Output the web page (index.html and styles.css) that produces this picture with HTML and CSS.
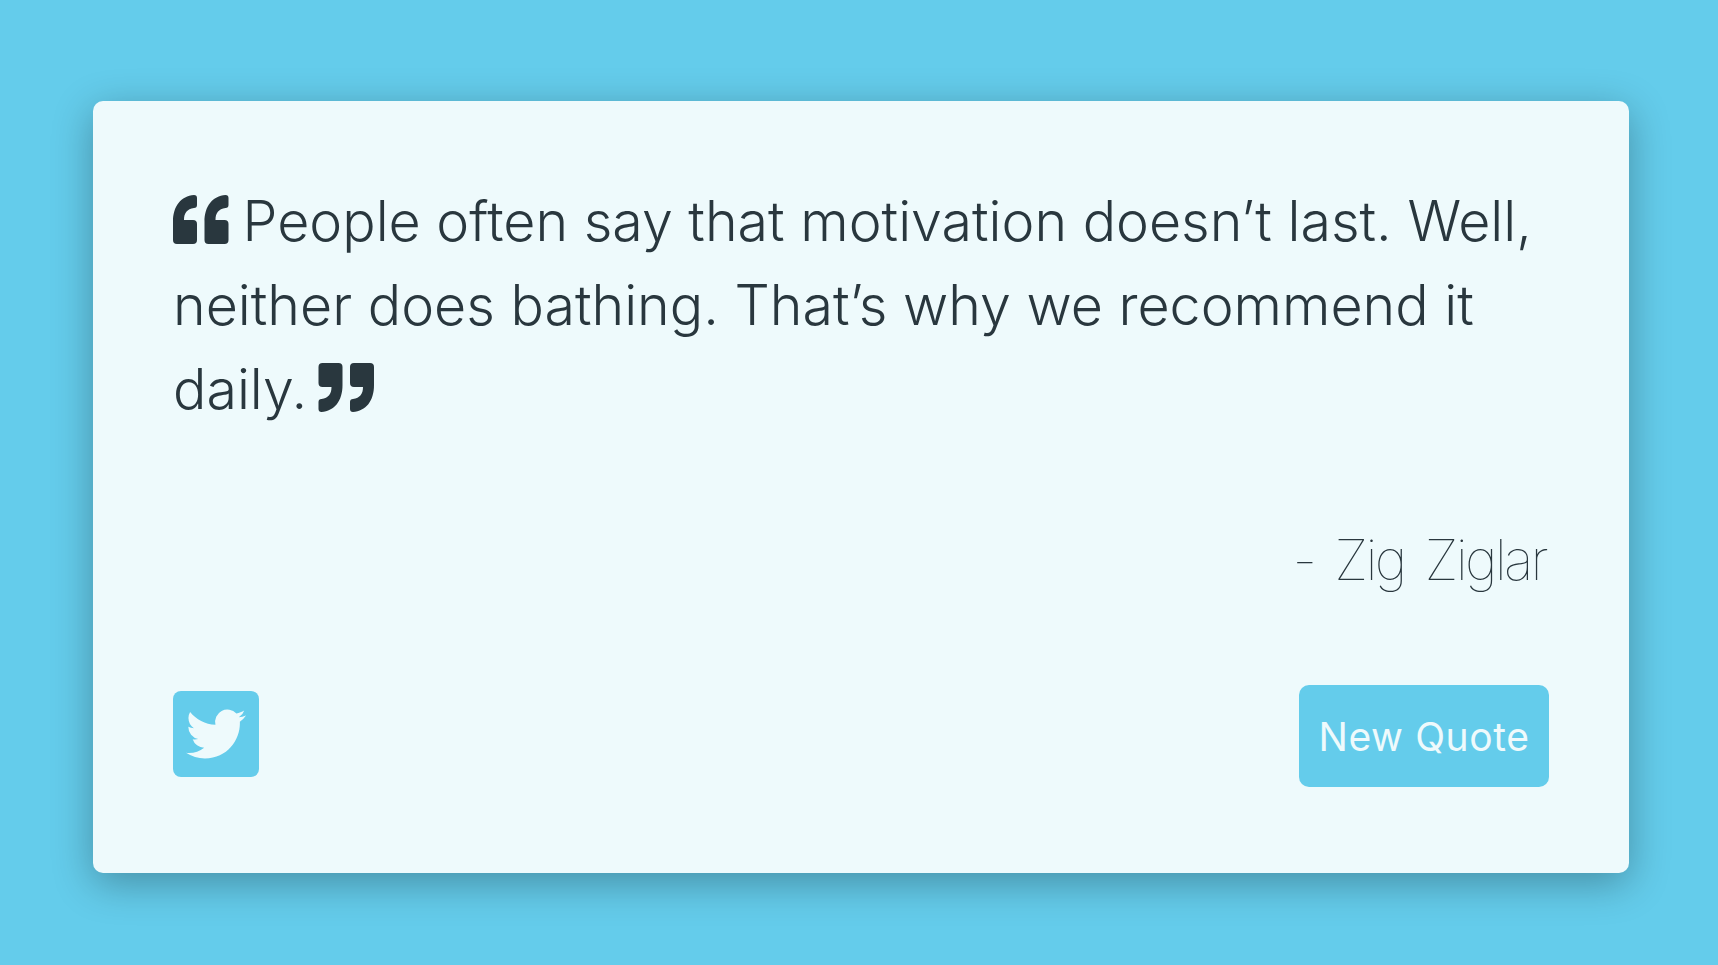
FILE: index.html
```html
<!DOCTYPE html>
<html lang="en">
<head>
    <meta charset="UTF-8" />
    <title>Random Quote</title>
    <link rel="stylesheet" href="styles.css">
</head>
<body>
    <svg class="defs" width="0" height="0">
        <symbol id="quote" viewBox="0 0 56 49">
            <path id="mark" d="M0 27C0 11 8 1 21 0q3 0 3 3v7q0 3-3 3C14 14 11 18 11 25h9q4 0 4 4v16q0 4-4 4H4q-4 0-4-4z"/>
            <use href="#mark" x="31.5"/>
        </symbol>
    </svg>
    <main class="card">
        <p class="quote">
            <svg class="mark open"><use href="#quote"/></svg> People often say that motivation doesn’t last. Well, neither does bathing. That’s why we recommend it daily. <svg class="mark flip"><use href="#quote"/></svg>
        </p>
        <p class="author">- Zig Ziglar</p>
        <div class="actions">
            <a href="javascript:;" class="tweet">
                <svg viewBox="0 0 24 24"><path d="M23.953 4.57a10 10 0 01-2.825.775 4.958 4.958 0 002.163-2.723c-.951.555-2.005.959-3.127 1.184a4.92 4.92 0 00-8.384 4.482C7.69 8.095 4.067 6.13 1.64 3.162a4.822 4.822 0 00-.666 2.475c0 1.71.87 3.213 2.188 4.096a4.904 4.904 0 01-2.228-.616v.06a4.923 4.923 0 003.946 4.827 4.996 4.996 0 01-2.212.085 4.936 4.936 0 004.604 3.417 9.867 9.867 0 01-6.102 2.105c-.39 0-.779-.023-1.17-.067a13.995 13.995 0 007.557 2.209c9.053 0 13.998-7.496 13.998-13.985 0-.21 0-.42-.015-.63A9.935 9.935 0 0024 4.59z"/></svg>
            </a>
            <a href="javascript:;" class="new-quote">New Quote</a>
        </div>
    </main>
</body>
</html>
```

FILE: styles.css
```css
html,body{
    height: 100%;
}
body{
    margin: 0;
    padding: 101px 89px 92px 93px;
    box-sizing: border-box;
    background: #64cceb;
    overflow: hidden;
}
.defs{
    position: absolute;
}
.card{
    height: 772px;
    box-sizing: border-box;
    padding: 78px 80px 86px;
    display: flex;
    flex-direction: column;
    background: #eefafc;
    border-radius: 10px;
    box-shadow: 0 10px 40px rgba(0,0,0,.3);
    color: #29373e;
}
.quote{
    margin: 0;
    font: 300 55.5px/84px "Inter", sans-serif;
}
.mark{
    width: 56px;
    height: 49px;
    fill: #29373e;
    vertical-align: -3px;
}
.open{
    margin-right: -2px;
}
.flip{
    margin-left: -5px;
    transform: rotate(180deg);
}
.author{
    margin: 87px 0 0;
    padding-right: 3px;
    text-align: right;
    font: 120 56px/84px "Inter", sans-serif;
    letter-spacing: -2.8px;
    word-spacing: 7px;
}
.actions{
    margin-top: auto;
    display: flex;
    justify-content: space-between;
    align-items: center;
}
a{
    text-decoration: none;
}
.tweet{
    width: 86px;
    height: 86px;
    margin-bottom: 4px;
    display: flex;
    align-items: center;
    justify-content: center;
    background: #64cceb;
    border-radius: 8px;
}
.tweet svg{
    width: 60px;
    height: 60px;
    fill: #eefafc;
}
.new-quote{
    width: 250px;
    height: 102px;
    text-align: center;
    background: #64cceb;
    border-radius: 10px;
    color: #eefafc;
    font: 400 39px/103px "Inter", sans-serif;
    letter-spacing: .6px;
}
```
